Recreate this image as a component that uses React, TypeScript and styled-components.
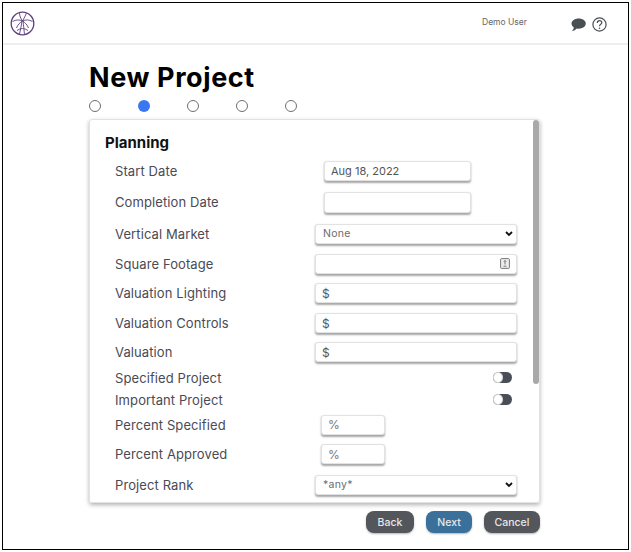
import styled, { createGlobalStyle } from "styled-components";

const Logo = () => (
  <svg width="25" height="25" viewBox="0 0 25 25" fill="none" stroke="#5d3f7f">
    <circle cx="12.500" cy="12.500" r="11.300" strokeWidth="1.300" />
    <path
      d="M12.500 10C9.500 8.500 6 8.500 2.500 10.500M12.500 10C15.500 8.500 19 8.500 22.500 10.500M12.500 10C10.500 7.500 9.500 4.500 9.500 1.800M12.500 10C14 7.500 15.500 4.500 16.500 2M12.500 10C10 11.500 7.500 14 6.500 17M12.500 10C15 11.500 17.500 14 18.500 17M12 10C11.500 14 10.500 19 9.500 23M13 10C13.500 14 14 19 14.500 23.500M7 19.500Q12.500 15.500 18 19.500"
      strokeWidth=".9"
    />
  </svg>
);

const ChatIcon = () => (
  <svg width="15" height="14" viewBox="0 0 15 14">
    <path
      d="M7.700.5C11.600.5 14.800 2.700 14.800 5.600S11.600 10.700 7.700 10.700C7 10.700 6.400 10.600 5.800 10.500C4.800 11.700 3 12.800.8 13.200C1.900 12.100 2.700 10.800 2.800 9.400C1.300 8.500.5 7.100.5 5.600.5 2.700 3.800.5 7.700.5Z"
      fill="#4a4f54"
    />
  </svg>
);

const HelpIcon = () => (
  <svg width="15" height="15" viewBox="0 0 15 15" fill="none" stroke="#4a4f54">
    <circle cx="7.500" cy="7.500" r="6.600" strokeWidth="1.200" />
    <path d="M5.300 5.900C5.300 4.500 6.300 3.700 7.500 3.700S9.800 4.500 9.800 5.700C9.800 7.300 7.500 7.400 7.500 9.300" strokeWidth="1.200" />
    <circle cx="7.500" cy="11.200" r=".8" fill="#4a4f54" stroke="none" />
  </svg>
);

const FieldIcon = () => (
  <svg width="10" height="11" viewBox="0 0 10 11" fill="none" stroke="#777">
    <rect x=".6" y=".6" width="8.800" height="9.800" rx="1" strokeWidth="1" fill="#eee" />
    <path d="M5 2.500V6.500M3.500 8.200H6.500M3.800 3.800L5 2.500 6.200 3.800" strokeWidth="1" />
  </svg>
);

const STEPS = [false, true, false, false, false];

const App = () => {
  return (
    <>
      <GlobalStyle />
      <Frame>
        <Header>
          <Logo />
          <UserName>Demo User</UserName>
          <HeaderIcons>
            <ChatIcon />
            <HelpIcon />
          </HeaderIcons>
        </Header>
        <Main>
          <Title>New Project</Title>
          <Steps>
            {STEPS.map((on, i) => (
              <Step key={i} type="radio" name="step" defaultChecked={on} />
            ))}
          </Steps>
          <Card>
            <Thumb />
            <SectionTitle>Planning</SectionTitle>
            <Row $h={31}>
              <Label>Start Date</Label>
              <Field $offset={9} $width={147}>
                <Input defaultValue="Aug 18, 2022" />
              </Field>
            </Row>
            <Row $h={32}>
              <Label>Completion Date</Label>
              <Field $offset={9} $width={147} $height={21}>
                <Input />
              </Field>
            </Row>
            <Row $h={31}>
              <Label>Vertical Market</Label>
              <SelectBox defaultValue="None">
                <option>None</option>
              </SelectBox>
            </Row>
            <Row $h={29}>
              <Label>Square Footage</Label>
              <Field>
                <Input />
                <FieldIcon />
              </Field>
            </Row>
            <Row $h={30}>
              <Label>Valuation Lighting</Label>
              <Field>
                <Affix>$</Affix>
                <Input />
              </Field>
            </Row>
            <Row $h={30}>
              <Label>Valuation Controls</Label>
              <Field>
                <Affix>$</Affix>
                <Input />
              </Field>
            </Row>
            <Row $h={28}>
              <Label>Valuation</Label>
              <Field>
                <Affix>$</Affix>
                <Input />
              </Field>
            </Row>
            <Row $h={23}>
              <Label>Specified Project</Label>
              <Toggle />
            </Row>
            <Row $h={21}>
              <Label>Important Project</Label>
              <Toggle />
            </Row>
            <Row $h={29}>
              <Label>Percent Specified</Label>
              <Field $offset={6} $width={64}>
                <Affix $muted>%</Affix>
                <Input />
              </Field>
            </Row>
            <Row $h={30}>
              <Label>Percent Approved</Label>
              <Field $offset={6} $width={64}>
                <Affix $muted>%</Affix>
                <Input />
              </Field>
            </Row>
            <Row $h={31}>
              <Label>Project Rank</Label>
              <SelectBox defaultValue="*any*">
                <option>*any*</option>
              </SelectBox>
            </Row>
          </Card>
          <Actions>
            <ActionButton $width={48}>Back</ActionButton>
            <ActionButton $width={46} $primary>
              Next
            </ActionButton>
            <ActionButton $width={56}>Cancel</ActionButton>
          </Actions>
        </Main>
      </Frame>
    </>
  );
};

export default App;

const chevron =
  "data:image/svg+xml,%3Csvg xmlns='http://www.w3.org/2000/svg' width='8' height='6'%3E%3Cpath d='M1 1l3 3 3-3' fill='none' stroke='%23111' stroke-width='1.800'/%3E%3C/svg%3E";

const GlobalStyle = createGlobalStyle`
  body {
    margin: 0;
    background: #fff;
    font-family: "Inter", "Liberation Sans", sans-serif;
    color: #4a4a55;
  }
`;

const Frame = styled.div`
  box-sizing: border-box;
  width: 627px;
  height: 548px;
  margin: 2px 0 0 2px;
  border: 1px solid #000;
  overflow: hidden;
`;

const Header = styled.header`
  display: flex;
  align-items: center;
  height: 40px;
  padding: 0 21px 0 7px;
  border-bottom: 2px solid #eeeeee;
`;

const UserName = styled.span`
  margin-left: auto;
  margin-right: 44px;
  margin-bottom: 2px;
  font-size: 8.5px;
  color: #666;
`;

const HeaderIcons = styled.div`
  display: flex;
  align-items: center;
  gap: 6px;
  margin-top: 3px;
`;

const Main = styled.main`
  width: 451px;
  margin-left: 86px;
`;

const Title = styled.h1`
  margin: 16px 0 0;
  font-size: 27px;
  line-height: 34px;
  font-weight: 700;
  letter-spacing: 0.6px;
  color: #000;
`;

const Steps = styled.div`
  display: flex;
  gap: 37px;
  margin-top: 5px;
`;

const Step = styled.input`
  appearance: none;
  box-sizing: border-box;
  width: 12px;
  height: 12px;
  margin: 0;
  border: 1px solid #6f6f6f;
  border-radius: 50%;
  background: #fff;

  &:checked {
    border: 0;
    background: #3b78f0;
  }
`;

const Card = styled.section`
  position: relative;
  box-sizing: border-box;
  height: 384px;
  margin-top: 7px;
  padding: 15px 23px 0 15px;
  border: 1px solid #e2e2e2;
  border-radius: 3px;
  box-shadow: 0 2px 4px rgba(0, 0, 0, 0.3);
  overflow: hidden;
`;

const Thumb = styled.div`
  position: absolute;
  top: 0;
  right: 0;
  width: 6px;
  height: 264px;
  border-radius: 3px;
  background: #a9a9a9;
`;

const SectionTitle = styled.h2`
  margin: 0 0 5px;
  font-size: 15px;
  line-height: 15px;
  font-weight: 700;
  color: #111;
`;

const Row = styled.div<{ $h: number }>`
  display: flex;
  align-items: center;
  height: ${(p) => p.$h}px;
  padding-left: 10px;
`;

const Label = styled.label`
  flex: none;
  width: 200px;
  font-size: 13px;
  letter-spacing: 0.1px;
  color: #4a4a55;
`;

const Field = styled.div<{ $offset?: number; $width?: number; $height?: number }>`
  display: flex;
  align-items: center;
  box-sizing: border-box;
  flex: none;
  margin-left: ${(p) => p.$offset ?? 0}px;
  width: ${(p) => p.$width ?? 202}px;
  height: ${(p) => p.$height ?? 20}px;
  padding: 0 6px;
  background: #fff;
  border: 1px solid #e2e2e2;
  border-radius: 3px;
  box-shadow: 0 1.5px 2px rgba(0, 0, 0, 0.35);
`;

const Input = styled.input`
  flex: 1;
  min-width: 0;
  padding: 0;
  border: 0;
  outline: 0;
  background: transparent;
  font: 400 11px "Inter", sans-serif;
  color: #555;
`;

const Affix = styled.span<{ $muted?: boolean }>`
  width: 14px;
  font-size: 12px;
  color: ${(p) => (p.$muted ? "#777" : "#5c5650")};
`;

const SelectBox = styled.select`
  flex: none;
  appearance: none;
  box-sizing: border-box;
  width: 202px;
  height: 20px;
  padding: 0 0 0 7px;
  background: #fff url("${chevron}") no-repeat right 3px center;
  border: 1px solid #e2e2e2;
  border-radius: 3px;
  box-shadow: 0 1.5px 2px rgba(0, 0, 0, 0.35);
  font: 400 10.5px "Inter", sans-serif;
  letter-spacing: 0.3px;
  color: #6b6b6b;
  outline: 0;
`;

const Toggle = styled.span`
  flex: none;
  margin-left: 178px;
  width: 19px;
  height: 11px;
  border-radius: 6px;
  background: #4a4f57;

  &::before {
    content: "";
    display: block;
    box-sizing: border-box;
    width: 10px;
    height: 11px;
    border: 1px solid #d4d4d4;
    border-radius: 50%;
    background: #fff;
  }
`;

const Actions = styled.div`
  display: flex;
  justify-content: flex-end;
  gap: 12px;
  margin-top: 8px;
`;

const ActionButton = styled.button<{ $width: number; $primary?: boolean }>`
  width: ${(p) => p.$width}px;
  height: 22px;
  padding: 0;
  border: 0;
  border-radius: 8px;
  background: ${(p) => (p.$primary ? "#3a7099" : "#53565b")};
  box-shadow: 0 1px 2px rgba(0, 0, 0, 0.3);
  font: 500 10.5px "Inter", sans-serif;
  color: #e8e8e8;
`;
